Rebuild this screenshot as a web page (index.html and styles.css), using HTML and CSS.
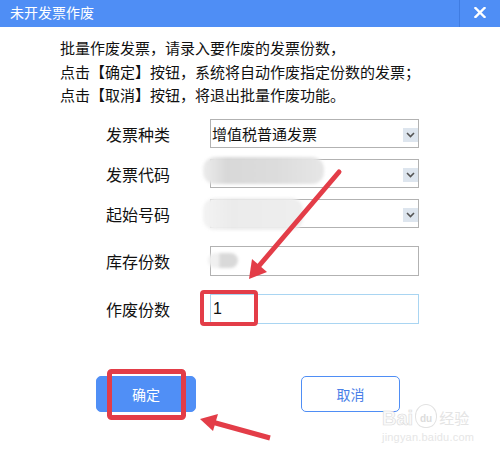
FILE: index.html
```html
<!DOCTYPE html>
<html lang="zh">
<head>
<meta charset="utf-8">
<title>未开发票作废</title>
<link rel="stylesheet" href="styles.css">
</head>
<body>
<div class="dialog">
  <div class="titlebar">
    <span class="title">未开发票作废</span>
    <span class="close">
      <svg width="12" height="11" viewBox="0 0 12 11"><path d="M1.5 1 L10.5 10 M10.5 1 L1.5 10" stroke="#fff" stroke-width="2.4" stroke-linecap="square"/></svg>
    </span>
  </div>
  <div class="intro">
    <p>批量作废发票，请录入要作废的发票份数，</p>
    <p>点击【确定】按钮，系统将自动作废指定份数的发票；</p>
    <p>点击【取消】按钮，将退出批量作废功能。</p>
  </div>
  <div class="form">
    <div class="row">
      <span class="label">发票种类</span>
      <div class="field select"><span class="value">增值税普通发票</span><span class="arrow"><svg width="9" height="6" viewBox="0 0 9 6"><path d="M1 1 L4.5 4.5 L8 1" fill="none" stroke="#555" stroke-width="1.6"/></svg></span></div>
    </div>
    <div class="row">
      <span class="label">发票代码</span>
      <div class="field select"><span class="blob blob2"></span><span class="arrow"><svg width="9" height="6" viewBox="0 0 9 6"><path d="M1 1 L4.5 4.5 L8 1" fill="none" stroke="#555" stroke-width="1.6"/></svg></span></div>
    </div>
    <div class="row">
      <span class="label">起始号码</span>
      <div class="field select"><span class="blob blob3"></span><span class="arrow"><svg width="9" height="6" viewBox="0 0 9 6"><path d="M1 1 L4.5 4.5 L8 1" fill="none" stroke="#555" stroke-width="1.6"/></svg></span></div>
    </div>
    <div class="row row-wide">
      <span class="label">库存份数</span>
      <div class="field input"><span class="blob blob4"></span></div>
    </div>
    <div class="row row-wide">
      <span class="label">作废份数</span>
      <div class="field input active"><span class="value">1</span></div>
    </div>
  </div>
  <div class="buttons">
    <button class="btn primary">确定</button>
    <button class="btn secondary">取消</button>
  </div>
  <div class="watermark">
    <div class="wm-top"><span class="wm-bai">Bai</span><span class="wm-paw">du</span><span class="wm-jy">经验</span></div>
    <div class="wm-url">jingyan.baidu.com</div>
  </div>
  <svg class="annot" width="500" height="455" viewBox="0 0 500 455">
    <rect x="109.5" y="371.5" width="74" height="46" rx="2" fill="none" stroke="#e33d48" stroke-width="5"/>
    <rect x="202" y="292" width="54" height="32" rx="2" fill="none" stroke="#e33d48" stroke-width="4"/>
    <line x1="339" y1="172" x2="258" y2="267" stroke="#e33d48" stroke-width="5" stroke-linecap="round"/>
    <polygon points="249,279 252,259 267,272" fill="#e33d48"/>
    <line x1="270" y1="438" x2="212" y2="422" stroke="#e33d48" stroke-width="5"/>
    <polygon points="200,419 218,414 213,431" fill="#e33d48"/>
  </svg>
</div>
</body>
</html>
```
FILE: styles.css
```css
* { box-sizing: border-box; }
html, body {
  margin: 0;
  padding: 0;
  background: #fff;
}
body {
  font-family: "Noto Sans CJK SC", "Noto Sans", sans-serif;
  color: #111;
}
.dialog {
  position: relative;
  width: 500px;
  height: 455px;
  overflow: hidden;
  background: #fff;
}
.titlebar {
  height: 27px;
  background: #4f8ef5;
  display: flex;
  align-items: center;
  justify-content: space-between;
}
.title {
  color: #fff;
  font-size: 14px;
  line-height: 27px;
  padding-left: 10px;
  margin-top: -2px;
}
.close {
  width: 41px;
  height: 27px;
  border-left: 1px solid #3f7ce2;
  display: flex;
  align-items: center;
  justify-content: center;
  padding-bottom: 3px;
}
.intro {
  padding: 9px 0 0 60px;
}
.intro p {
  margin: 0;
  font-size: 15px;
  line-height: 23.5px;
  height: 23.5px;
  color: #111;
}
.form {
  margin-top: 12.5px;
  padding-left: 106px;
  display: flex;
  flex-direction: column;
  gap: 11px;
}
.row {
  display: flex;
  align-items: center;
  height: 29px;
}
.row-wide {
  height: 30px;
  margin-top: 7px;
}
.label {
  width: 104px;
  font-size: 16px;
  line-height: 20px;
  color: #111;
}
.field {
  position: relative;
  width: 209px;
  height: 100%;
  border: 1px solid #b2b2b2;
  background: #fff;
  display: flex;
  align-items: center;
}
.field.active {
  border-color: #a9d5f2;
}
.value {
  padding-left: 1px;
  font-size: 15px;
  line-height: 20px;
  color: #111;
}
.active .value {
  font-family: "Liberation Sans", sans-serif;
  font-size: 16px;
  padding-left: 2px;
}
.arrow {
  position: absolute;
  right: 0;
  top: 8px;
  width: 15px;
  height: 14px;
  background: #dde5ee;
  display: flex;
  align-items: center;
  justify-content: center;
}
.blob {
  position: absolute;
  border-radius: 12px;
  filter: blur(1.5px);
}
.blob2 {
  left: -8px;
  top: -3px;
  width: 121px;
  height: 27px;
  background: linear-gradient(90deg, #ececec 0%, #d8d8d8 20%, #dcdcdc 60%, #e6e6e6 100%);
}
.blob3 {
  left: -8px;
  top: -2px;
  width: 100px;
  height: 32px;
  background: linear-gradient(90deg, #f3f3f3 0%, #ebebeb 30%, #eeeeee 100%);
}
.blob4 {
  left: -3px;
  top: 6px;
  width: 30px;
  height: 15px;
  border-radius: 8px;
  background: linear-gradient(90deg, #f0f0f0 0%, #f0f0f0 35%, #d9d9d9 40%, #d9d9d9 100%);
}
.buttons {
  margin-top: 52px;
  padding-left: 96px;
  display: flex;
  gap: 105px;
}
.btn {
  height: 36px;
  font-family: "Noto Sans CJK SC", sans-serif;
  font-size: 14px;
  border-radius: 5px;
  padding: 0;
  cursor: pointer;
}
.primary {
  width: 100px;
  background: #508ff6;
  border: 1px solid #508ff6;
  color: #fff;
}
.secondary {
  width: 99px;
  background: #fff;
  border: 1.5px solid #4f8ef5;
  color: #4a7fe8;
}
.watermark {
  position: absolute;
  left: 382px;
  top: 400px;
  font-family: "Liberation Sans", sans-serif;
}
.wm-top {
  display: flex;
  align-items: flex-end;
  height: 28px;
}
.wm-bai {
  font-size: 20px;
  font-weight: bold;
  line-height: 20px;
  -webkit-text-stroke: 0.6px #dadada;
  color: #fafafa;
}
.wm-paw {
  width: 22px;
  height: 24px;
  margin: 0 2px;
  border-radius: 50% 50% 45% 45%;
  border: 1.5px solid #e2e2e2;
  font-size: 10px;
  font-weight: bold;
  color: #dcdcdc;
  display: flex;
  align-items: flex-end;
  justify-content: center;
  padding-bottom: 3px;
}
.wm-jy {
  font-family: "Noto Sans CJK SC", sans-serif;
  font-size: 15px;
  line-height: 20px;
  color: #e4e4e4;
}
.wm-url {
  font-size: 11px;
  line-height: 14px;
  color: #e6e6e6;
  margin-top: 2px;
  letter-spacing: 0.2px;
}
.annot {
  position: absolute;
  left: 0;
  top: 0;
  pointer-events: none;
}
```
